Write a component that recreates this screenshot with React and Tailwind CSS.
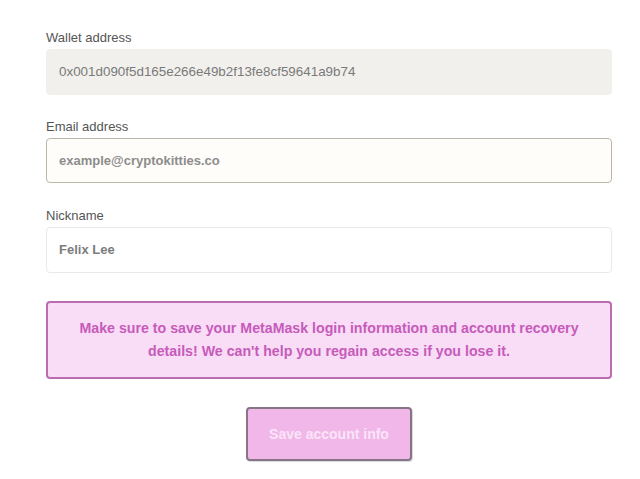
import React from "react";

function Field({ label, children }) {
  return (
    <div className="flex flex-col">
      <div className="text-[13px] leading-[18px] pt-[1px] h-[18px] text-[#555555] mb-[3px]">{label}</div>
      {children}
    </div>
  );
}

export default function App() {
  return (
    <div
      className="w-[640px] h-[479px] bg-white pl-[46px] pr-[28px] pt-[28px] flex flex-col"
      style={{ fontFamily: '"Liberation Sans", Arial, sans-serif' }}
    >
      <Field label="Wallet address">
        <div className="h-[46px] rounded-[4px] bg-[#f1f0ec] border border-[#f1f0ec] flex items-center pl-[12px] text-[13.4px] text-[#7a7a7a]">
          0x001d090f5d165e266e49b2f13fe8cf59641a9b74
        </div>
      </Field>
      <div className="h-[22px]" />
      <Field label="Email address">
        <div className="h-[45px] rounded-[4px] bg-[#fffdfa] border border-[#bdb5a8] flex items-center pl-[12px] text-[13px] font-bold text-[#8c8c8c]">
          example@cryptokitties.co
        </div>
      </Field>
      <div className="h-[23px]" />
      <Field label="Nickname">
        <div className="h-[46px] rounded-[4px] bg-white border border-[#e9e9e7] flex items-center pl-[12px] text-[13px] font-bold text-[#7c7c7c]">
          Felix Lee
        </div>
      </Field>
      <div className="h-[28px]" />
      <div className="h-[78px] rounded-[4px] bg-[#f9dcf5] border-2 border-[#bb6db1] flex items-center justify-center text-center text-[14.2px] font-bold leading-[23px] text-[#c65bbb]">
        <p>
          Make sure to save your MetaMask login information and account recovery
          <br />
          details! We can't help you regain access if you lose it.
        </p>
      </div>
      <div className="h-[28px]" />
      <div className="flex justify-center">
        <button className="w-[166px] h-[54px] rounded-[4px] bg-[#f0b7e8] border-2 border-[#877487] shadow-[1px_1px_1px_rgba(0,0,0,0.15)] text-[14px] font-bold text-[#fbe4f8]">
          Save account info
        </button>
      </div>
    </div>
  );
}
